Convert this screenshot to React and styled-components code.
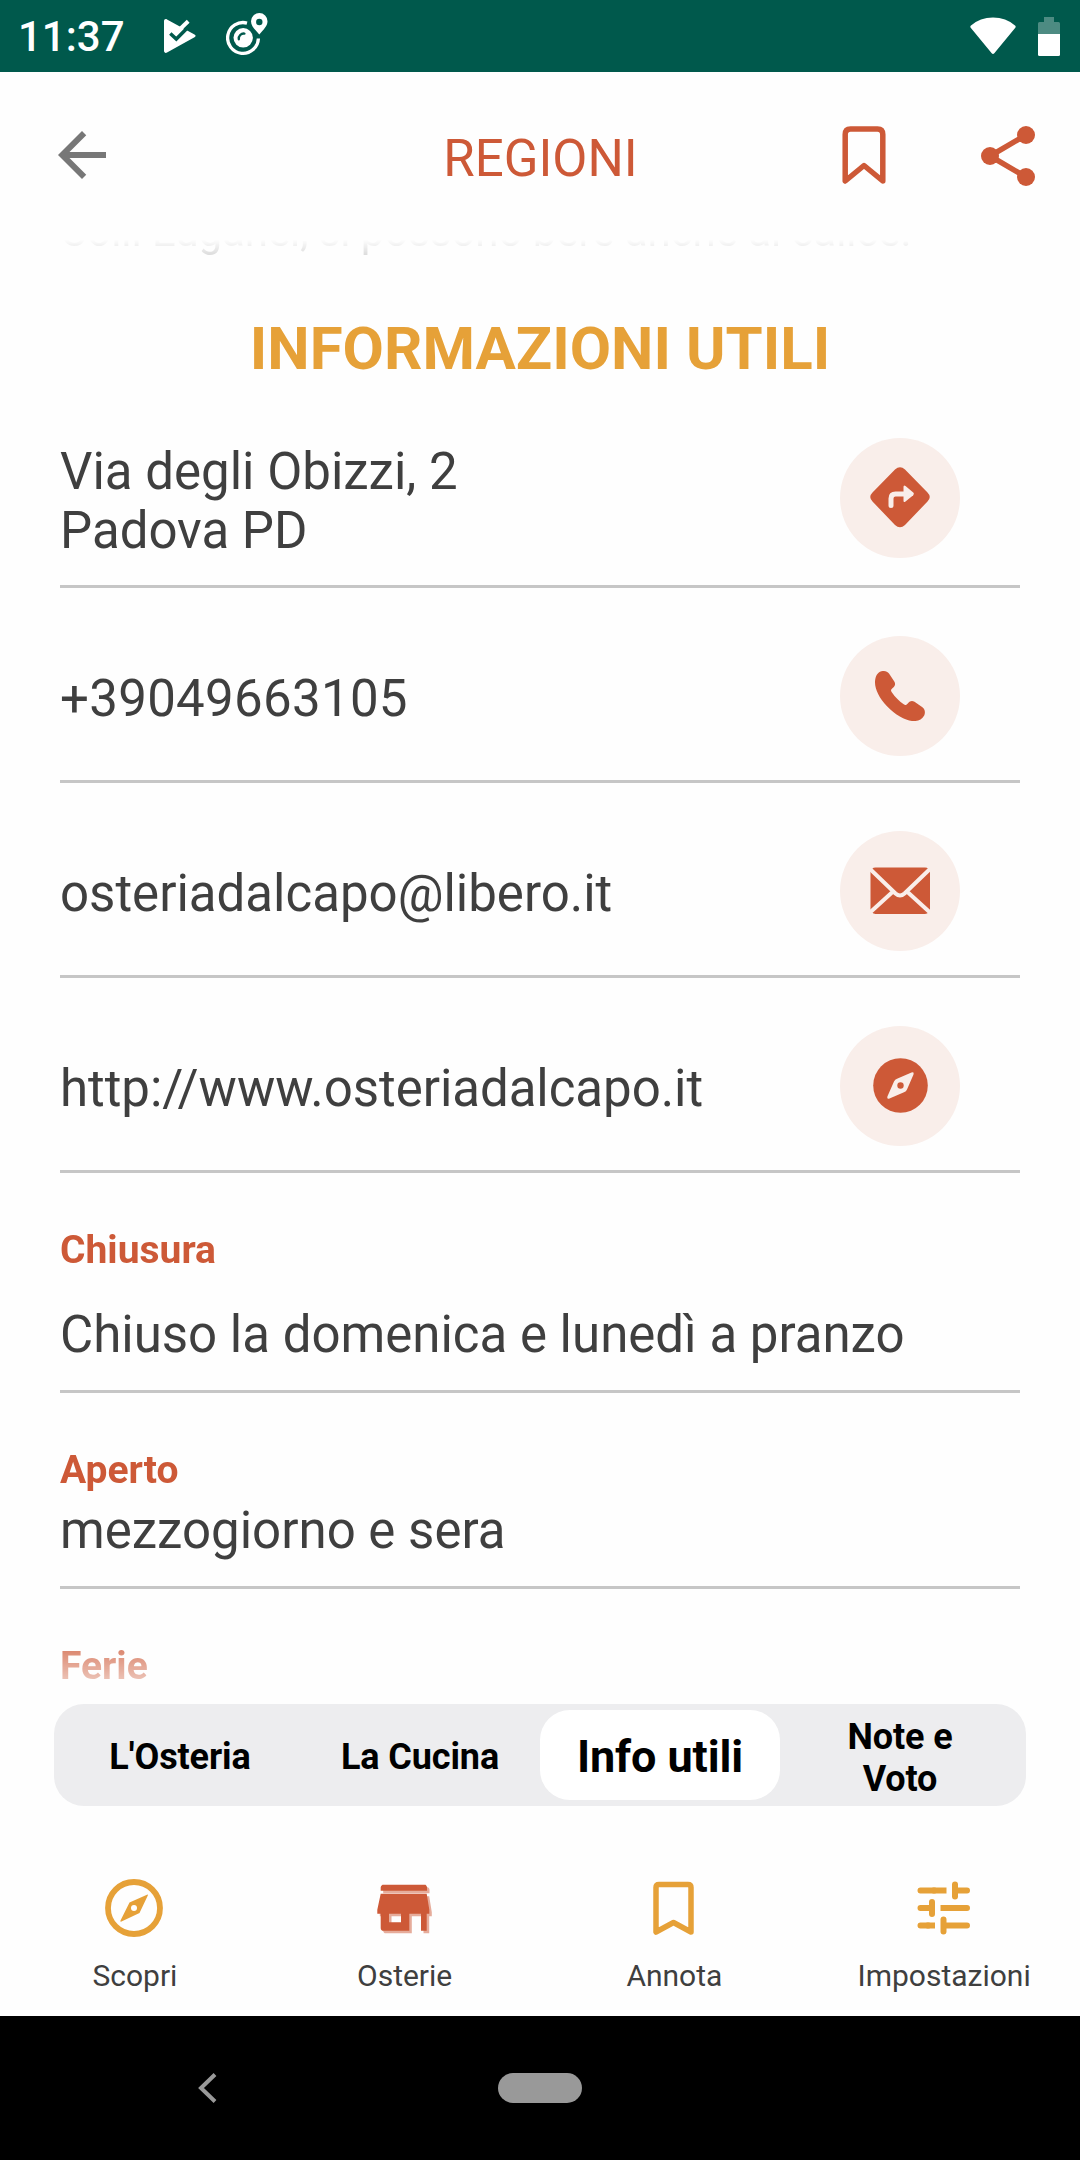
import React from 'react';
import styled, { createGlobalStyle } from 'styled-components';

const orange = '#cd5937';
const amber = '#e6a138';
const ink = '#3f3f3f';

const GlobalStyle = createGlobalStyle`
* {
box-sizing: border-box;
}
body {
margin: 0;
font-family: Roboto, sans-serif;
background-color: #ffffff;
}
`;

const Screen = styled.div`
display: flex;
flex-direction: column;
height: 2160px;
width: 1080px;
overflow: hidden;
background-color: #fefefe;
`;

const StatusBar = styled.div`
display: flex;
align-items: center;
height: 72px;
padding: 0 20px 0 18px;
background-color: #00594c;
color: #ffffff;
`;

const Clock = styled.span`
width: 145px;
font-size: 42px;
font-weight: 500;
line-height: 72px;
padding-top: 2px;
`;

const StatusIcons = styled.div`
display: flex;
align-items: center;
gap: ${props => (props.$end ? '22px' : '30px')};
margin-left: ${props => (props.$end ? 'auto' : '0')};
padding-bottom: ${props => (props.$end ? '0' : '3px')};
`;

const Header = styled.header`
display: grid;
grid-template-columns: 1fr auto 1fr;
align-items: center;
height: 168px;
padding: 0 45px 0 46px;
`;

const HeaderTitle = styled.h1`
margin: 0;
padding-top: 5px;
font-size: 51px;
font-weight: 400;
color: ${orange};
`;

const HeaderActions = styled.div`
display: flex;
justify-content: flex-end;
gap: 95px;
`;

const IconButton = styled.button`
display: flex;
padding: 0;
border: 0;
background: none;
color: ${props => props.$color};
`;

const ScrollView = styled.main`
height: 1470px;
flex: none;
padding: 0 60px;
overflow: hidden;
color: ${ink};
mask-image: linear-gradient(to bottom, transparent, #000 84px, #000 calc(100% - 84px), transparent);
`;

const Excerpt = styled.p`
margin: -33px 0 0;
font-size: 42px;
line-height: 49px;
letter-spacing: -0.07px;
white-space: nowrap;
`;

const SectionTitle = styled.h2`
margin: 58px 0 0;
font-size: 60px;
line-height: 70px;
font-weight: 700;
text-align: center;
color: ${amber};
`;

const ContactRow = styled.div`
display: flex;
align-items: center;
justify-content: space-between;
height: ${props => (props.$tall ? '204px' : '195px')};
padding: ${props => (props.$tall ? '54px 60px 27px 0' : '48px 60px 24px 0')};
border-bottom: 3px solid #c6c6c6;
`;

const ContactText = styled.div`
padding-top: ${props => (props.$tall ? '5px' : '4px')};
font-size: 51px;
line-height: 59px;
letter-spacing: ${props => props.$tracking || 0}px;
white-space: pre-line;
`;

const RoundButton = styled.button`
display: flex;
align-items: center;
justify-content: center;
height: 120px;
width: 120px;
padding: 0;
border: 0;
border-radius: 50%;
background-color: #f9eeea;
color: ${orange};
`;

const Detail = styled.section`
display: flex;
flex-direction: column;
gap: ${props => props.$gap}px;
padding: 54px 0 25px;
border-bottom: 3px solid #c6c6c6;

&:last-child {
border-bottom: 0;
}
`;

const DetailLabel = styled.div`
font-size: 39px;
line-height: 46px;
font-weight: 700;
color: ${orange};
`;

const DetailText = styled.div`
font-size: 51px;
line-height: 60px;
`;

// The pill rides over the last pixels of the scrolled text
const SegmentBar = styled.nav`
display: grid;
grid-template-columns: repeat(4, 240px);
flex: none;
height: 102px;
margin: -6px 54px 0;
padding: 6px;
border-radius: 30px;
background-color: #ededef;
`;

const Segment = styled.button`
display: flex;
align-items: center;
justify-content: center;
padding: ${props => (props.$wrap ? '6px' : '4px')} 40px 0;
border: 0;
border-radius: 30px;
background-color: ${props => (props.$active ? '#ffffff' : 'transparent')};
font-family: inherit;
font-size: ${props => (props.$active ? 45 : 36)}px;
line-height: 42px;
font-weight: 700;
letter-spacing: -0.1px;
color: #000000;
white-space: ${props => (props.$wrap ? 'normal' : 'nowrap')};
`;

const TabBar = styled.nav`
display: grid;
grid-template-columns: repeat(4, 1fr);
flex: none;
height: 210px;
padding: 66px 1px 0 0;
`;

const Tab = styled.a`
display: flex;
flex-direction: column;
align-items: center;
gap: 14px;
font-size: 30px;
line-height: 36px;
color: ${ink};
`;

const SystemBar = styled.div`
display: grid;
grid-template-columns: 1fr 84px 1fr;
align-items: center;
flex: none;
height: 144px;
background-color: #000000;
`;

const BackKey = styled.div`
display: flex;
padding-left: 198px;
`;

const HomePill = styled.div`
height: 30px;
border-radius: 15px;
background-color: #999999;
`;

const PlayCheckIcon = () => (
  <svg width="33" height="42" viewBox="0 -4 33 42" fill="none">
    <path d="M1 3.200C1 1.300 2.600.600 4 1.400L31.500 16.500C33 17.300 33 18.400 31.500 19.300L4 34.600C2.600 35.400 1 34.700 1 32.800Z" fill="#fff" />
    <path d="M13 15L25.200 3.300" stroke="#fff" strokeWidth="4" />
    <path d="M7.300 15.500l6 5.500L27.500 6.800" stroke="#00594c" strokeWidth="3.500" />
  </svg>
);

const PlatePinIcon = () => (
  <svg width="42" height="43" viewBox="0 0 42 43" fill="none">
    <path d="M21 10.100A15.400 15.400 0 1 0 32.400 25.500" stroke="#fff" strokeWidth="3.300" />
    <circle cx="17.200" cy="24.800" r="9.700" fill="#fff" />
    <path d="M12.800 26.200a5 5 0 0 1 5.600-5.600" stroke="#00594c" strokeWidth="2.400" strokeLinecap="round" />
    <path fillRule="evenodd" d="M33.300 0a8.200 8.200 0 0 1 8.200 8.300c0 5-4 8.200-8.200 13.200-4.300-5-8.300-8.200-8.300-13.200A8.300 8.300 0 0 1 33.300 0zm0 5.800a3.200 3.200 0 1 0 0 6.400 3.200 3.200 0 0 0 0-6.400z" fill="#fff" />
  </svg>
);

const WifiIcon = () => (
  <svg width="46" height="39" viewBox="0 0 46 39">
    <path d="M1 8.500Q10 .5 23 .5t22 8q1.200 1 .3 2.200L24.300 36.200q-1.300 1.400-2.600 0L.7 10.700Q-.2 9.500 1 8.500z" fill="#fff" />
  </svg>
);

const BatteryIcon = () => (
  <svg width="22" height="39" viewBox="0 0 22 39">
    <path d="M6 0h10v5h4.500Q22 5 22 6.500V17H0V6.500Q0 5 1.500 5H6z" fill="#fff" opacity=".3" />
    <path d="M0 17h22v20.500q0 1.500-1.500 1.500h-19Q0 39 0 37.500z" fill="#fff" />
  </svg>
);

const ArrowBackIcon = () => (
  <svg width="72" height="74" viewBox="0 0 24 24.600" fill="currentColor">
    <path d="M20 11H7.830l5.590-5.590L12 4l-8 8 8 8 1.410-1.410L7.830 13H20v-2z" />
  </svg>
);

const HeaderBookmarkIcon = () => (
  <svg width="44" height="60" viewBox="0 0 44 60" fill="none" stroke="currentColor" strokeWidth="5.500" strokeLinejoin="round">
    <path d="M3.200 55V8.500Q3.200 3 8.500 3h27Q40.800 3 40.800 8.500V55L22 39.500z" />
  </svg>
);

const ShareIcon = () => (
  <svg width="54" height="60" viewBox="0 0 54 60" fill="currentColor">
    <path d="M45 9L9 30l36 21" fill="none" stroke="currentColor" strokeWidth="5.500" />
    <circle cx="45" cy="9" r="9" />
    <circle cx="9" cy="30" r="9" />
    <circle cx="45" cy="51" r="9" />
  </svg>
);

const DirectionsIcon = () => (
  <svg width="60" height="63" viewBox="0 0 60 63">
    <path d="M25 2.500q5-4.500 10 0l22.500 23q4.500 4.500 0 9L35 58q-5 4.500-10 0L2.500 34.500q-4.500-4.500 0-9z" fill="currentColor" />
    <path d="M21 38.500V31.500q0-4.500 4.500-4.500H36" fill="none" stroke="#f9eeea" strokeWidth="5" strokeLinecap="round" />
    <path d="M33.500 20v13.500q0 2.500 2 1l7.700-6.300q1.500-1.300 0-2.600L35.500 19q-2-1.500-2 1z" fill="#f9eeea" />
  </svg>
);

const PhoneIcon = () => (
  <svg width="50" height="50" viewBox="0 0 50 50" fill="currentColor">
    <path d="M5 0.800C8 -.8 12 0 14 2.600L19.300 10.500C20.800 13 20 15 18 16.800 15.800 18.600 15.500 19.500 16.800 21.300 20 26 24 30 28.700 33.300 30.300 34.500 31.400 34.200 33 32.200 35 30 37 29.300 39.500 30.800L47.400 36.200C50 38 50.500 41.500 49.200 44.500 46.800 49 42 50.500 37 50 30 49.500 20 43.500 12 35.300 4.500 27.500 0 18.500 0 11.500 0 6.500 1.800 2.500 5 .8z" />
  </svg>
);

const MailIcon = () => (
  <svg width="60" height="49" viewBox="0 0 60 49">
    <rect x="0.500" y="0.500" width="59.500" height="46.500" rx="5" fill="currentColor" />
    <path d="M0 2L25.500 26.500Q30 30.500 34.500 26.500L60 2M0 45.500L22.500 25M60 45.500L37.500 25" fill="none" stroke="#f9eeea" strokeWidth="4" />
  </svg>
);

const CompassIcon = () => (
  <svg width="55" height="57" viewBox="0 0 55 57">
    <circle cx="27.500" cy="27.500" r="27.300" fill="currentColor" />
    <path d="M14.400 38.500L21 23.500q1-2 3-2.800L38.500 14.500q3-.8 2 2L34 31.500q-.8 2-3 2.800L16.500 40.500q-3 .8-2.100-2z" fill="#f9eeea" />
    <circle cx="27.500" cy="27.500" r="3.200" fill="currentColor" />
  </svg>
);

const ScopriIcon = () => (
  <svg width="72" height="72" viewBox="0 0 72 72">
    <circle cx="35" cy="36" r="26" fill="none" stroke={amber} strokeWidth="5.800" />
    <path d="M21.500 48.500L30.500 30.500 48.500 22.500q.8 0 .3 1L40.500 41 22.500 49.600q-1.500.4-1-1.100z" fill={amber} />
    <circle cx="35" cy="36" r="3" fill="#fff" />
  </svg>
);

const storePath = 'M13.500 12.700h43q1.500 1 1.500 2.500v3.500H11.700v-3.500q0-1.500 1.800-2.500zM11.700 21.700h46l2.600 16v4h-2.600v17h-5.700v-17H40.300v17H14.500q-2.800 0-2.800-2.800V41.700H8.300v-4zM20 41.700v8.600h12v-8.600z';

const OsterieIcon = () => (
  <svg width="72" height="72" viewBox="0 0 72 72" fillRule="evenodd" fill={orange}>
    <path d={storePath} transform="translate(2.500 2.500)" opacity=".5" />
    <path d={storePath} />
  </svg>
);

const AnnotaIcon = () => (
  <svg width="72" height="72" viewBox="0 0 72 72">
    <path d="M18 60V15.500q0-3 3-3h29q3 0 3 3V60L35.500 50.500z" fill="none" stroke={amber} strokeWidth="5.500" strokeLinejoin="round" />
  </svg>
);

const ImpostazioniIcon = () => (
  <svg width="72" height="72" viewBox="0 0 72 72" fill="none" stroke={amber} strokeWidth="6" strokeLinecap="round">
    <path d="M12.500 18.500h14M50.500 18.500h8.500M47 12.500v12M12.500 36h11M48.500 36h10.500M24 30v12M12.500 53.500h8M35.500 53.500h23.500M35.500 47.500v12" />
    <path d="M24.500 18.500h14M32.500 36h18M18.500 53.500h8.500" strokeLinecap="butt" />
  </svg>
);

const ChevronIcon = () => (
  <svg width="20" height="32" viewBox="0 0 20 32">
    <path d="M17 2.500L3 16l14 13.500" fill="none" stroke="#999999" strokeWidth="4" />
  </svg>
);

const contacts = [
  { text: 'Via degli Obizzi, 2\nPadova PD', icon: <DirectionsIcon />, tall: true },
  { text: '+39049663105', icon: <PhoneIcon />, tracking: 0.3 },
  { text: 'osteriadalcapo@libero.it', icon: <MailIcon /> },
  { text: 'http://www.osteriadalcapo.it', icon: <CompassIcon />, tracking: -0.05 },
];

const segments = [
  { label: "L'Osteria" },
  { label: 'La Cucina' },
  { label: 'Info utili', active: true },
  { label: 'Note e Voto', wrap: true },
];

const tabs = [
  { label: 'Scopri', icon: <ScopriIcon /> },
  { label: 'Osterie', icon: <OsterieIcon /> },
  { label: 'Annota', icon: <AnnotaIcon /> },
  { label: 'Impostazioni', icon: <ImpostazioniIcon /> },
];

export default () => {
  return (
    <Screen>
      <GlobalStyle />
      <StatusBar>
        <Clock>11:37</Clock>
        <StatusIcons>
          <PlayCheckIcon />
          <PlatePinIcon />
        </StatusIcons>
        <StatusIcons $end>
          <WifiIcon />
          <BatteryIcon />
        </StatusIcons>
      </StatusBar>
      <Header>
        <IconButton $color="#777777"><ArrowBackIcon /></IconButton>
        <HeaderTitle>REGIONI</HeaderTitle>
        <HeaderActions>
          <IconButton $color={orange}><HeaderBookmarkIcon /></IconButton>
          <IconButton $color={orange}><ShareIcon /></IconButton>
        </HeaderActions>
      </Header>
      <ScrollView>
        <Excerpt>Colli Euganei, si possono bere anche al calice.</Excerpt>
        <SectionTitle>INFORMAZIONI UTILI</SectionTitle>
        {contacts.map(({ text, icon, tall, tracking }) => (
          <ContactRow key={text} $tall={tall}>
            <ContactText $tall={tall} $tracking={tracking}>{text}</ContactText>
            <RoundButton>{icon}</RoundButton>
          </ContactRow>
        ))}
        <Detail $gap={32}>
          <DetailLabel>Chiusura</DetailLabel>
          <DetailText>Chiuso la domenica e lunedì a pranzo</DetailText>
        </Detail>
        <Detail $gap={8}>
          <DetailLabel>Aperto</DetailLabel>
          <DetailText>mezzogiorno e sera</DetailText>
        </Detail>
        <Detail $gap={8}>
          <DetailLabel>Ferie</DetailLabel>
        </Detail>
      </ScrollView>
      <SegmentBar>
        {segments.map(({ label, active, wrap }) => (
          <Segment key={label} $active={active} $wrap={wrap}>{label}</Segment>
        ))}
      </SegmentBar>
      <TabBar>
        {tabs.map(({ label, icon }) => (
          <Tab key={label}>
            {icon}
            {label}
          </Tab>
        ))}
      </TabBar>
      <SystemBar>
        <BackKey><ChevronIcon /></BackKey>
        <HomePill />
      </SystemBar>
    </Screen>
  );
}
